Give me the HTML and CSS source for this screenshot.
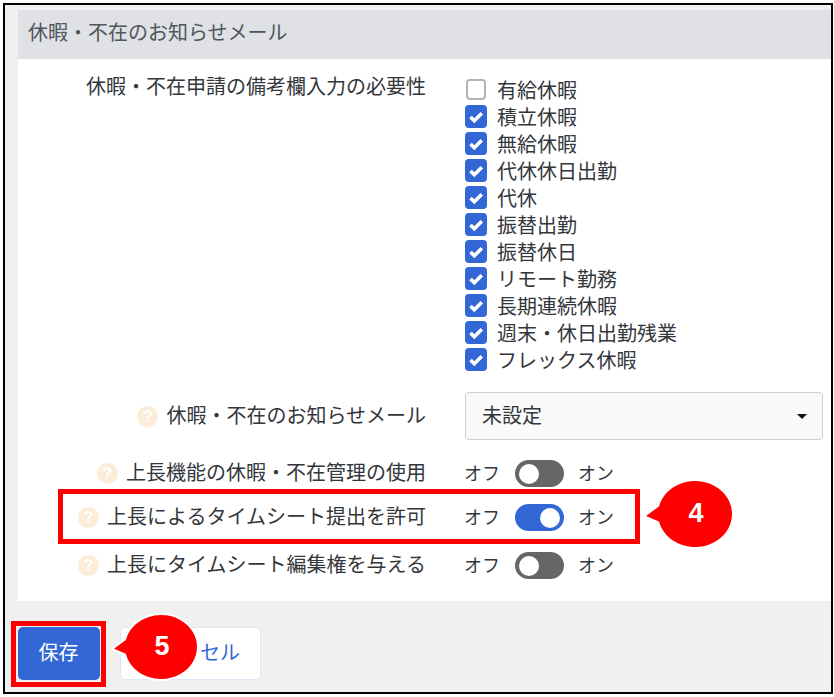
FILE: index.html
```html
<!DOCTYPE html>
<html lang="ja">
<head>
<meta charset="utf-8">
<title>休暇・不在のお知らせメール</title>
<link rel="stylesheet" href="styles.css">
</head>
<body>
<div class="frame">
  <section class="card">
    <h2 class="card-head">休暇・不在のお知らせメール</h2>
    <div class="card-body">
      <div class="row row-checks">
        <div class="label label-top">休暇・不在申請の備考欄入力の必要性</div>
        <ul class="checks">
          <li class="check-row"><span class="box"></span><span class="ctxt">有給休暇</span></li>
          <li class="check-row"><span class="box on"><svg viewBox="0 0 22 22"><path d="M5.5 11.5l3.8 3.8L16.8 7.8" /></svg></span><span class="ctxt">積立休暇</span></li>
          <li class="check-row"><span class="box on"><svg viewBox="0 0 22 22"><path d="M5.5 11.5l3.8 3.8L16.8 7.8" /></svg></span><span class="ctxt">無給休暇</span></li>
          <li class="check-row"><span class="box on"><svg viewBox="0 0 22 22"><path d="M5.5 11.5l3.8 3.8L16.8 7.8" /></svg></span><span class="ctxt">代休休日出勤</span></li>
          <li class="check-row"><span class="box on"><svg viewBox="0 0 22 22"><path d="M5.5 11.5l3.8 3.8L16.8 7.8" /></svg></span><span class="ctxt">代休</span></li>
          <li class="check-row"><span class="box on"><svg viewBox="0 0 22 22"><path d="M5.5 11.5l3.8 3.8L16.8 7.8" /></svg></span><span class="ctxt">振替出勤</span></li>
          <li class="check-row"><span class="box on"><svg viewBox="0 0 22 22"><path d="M5.5 11.5l3.8 3.8L16.8 7.8" /></svg></span><span class="ctxt">振替休日</span></li>
          <li class="check-row"><span class="box on"><svg viewBox="0 0 22 22"><path d="M5.5 11.5l3.8 3.8L16.8 7.8" /></svg></span><span class="ctxt">リモート勤務</span></li>
          <li class="check-row"><span class="box on"><svg viewBox="0 0 22 22"><path d="M5.5 11.5l3.8 3.8L16.8 7.8" /></svg></span><span class="ctxt">長期連続休暇</span></li>
          <li class="check-row"><span class="box on"><svg viewBox="0 0 22 22"><path d="M5.5 11.5l3.8 3.8L16.8 7.8" /></svg></span><span class="ctxt">週末・休日出勤残業</span></li>
          <li class="check-row"><span class="box on"><svg viewBox="0 0 22 22"><path d="M5.5 11.5l3.8 3.8L16.8 7.8" /></svg></span><span class="ctxt">フレックス休暇</span></li>
        </ul>
      </div>
      <div class="row row-select">
        <div class="label"><span class="help">?</span><span class="txt">休暇・不在のお知らせメール</span></div>
        <div class="select"><span class="txt">未設定</span><span class="caret"></span></div>
      </div>
      <div class="row row-toggle-a">
        <div class="label"><span class="help">?</span><span class="txt">上長機能の休暇・不在管理の使用</span></div>
        <div class="toggle-line"><span class="tl">オフ</span><span class="switch"></span><span class="tl">オン</span></div>
      </div>
      <div class="row row-toggle-b">
        <div class="label"><span class="help">?</span><span class="txt">上長によるタイムシート提出を許可</span></div>
        <div class="toggle-line"><span class="tl">オフ</span><span class="switch on"></span><span class="tl">オン</span></div>
      </div>
      <div class="row row-toggle-c">
        <div class="label"><span class="help">?</span><span class="txt">上長にタイムシート編集権を与える</span></div>
        <div class="toggle-line"><span class="tl">オフ</span><span class="switch"></span><span class="tl">オン</span></div>
      </div>
    </div>
  </section>
  <footer class="actions">
    <button class="btn btn-save">保存</button>
    <button class="btn btn-cancel">キャンセル</button>
  </footer>
</div>

<div class="mark mark-toggle"></div>
<div class="mark mark-save"></div>

<div class="callout callout-4">
  <svg viewBox="0 0 90 72"><path d="M3 38 L16 28.4 A37 33 0 1 1 16 43.6 Z" /></svg>
  <span class="callout-num">4</span>
</div>
<div class="callout callout-5">
  <svg viewBox="0 0 90 72"><path class="outlined" d="M3 38 L16 28.4 A37 33 0 1 1 16 43.6 Z" /></svg>
  <span class="callout-num">5</span>
</div>
</body>
</html>
```
FILE: styles.css
```css
* { box-sizing: border-box; }
html, body { margin: 0; padding: 0; }
body {
  width: 834px;
  height: 697px;
  background: #fff;
  position: relative;
  overflow: hidden;
  font-family: "Noto Sans CJK JP", "Noto Sans", sans-serif;
  font-size: 20px;
  color: #33363b;
}
.frame {
  margin: 3px 0 0 3px;
  width: 830px;
  height: 691px;
  border: 2px solid #000;
  background: #f0f0f0;
  padding: 5px 0 0 13px;
  display: flex;
  flex-direction: column;
}
.card { background: #fff; height: 591px; }
.card-head {
  margin: 0;
  height: 49px;
  background: #dfe1e5;
  padding: 0 10px;
  font-size: 20px;
  font-weight: 400;
  line-height: 44px;
  color: #50555c;
}
.card-body { padding: 17px 8px 0 0; }
.row {
  display: grid;
  grid-template-columns: 408px 358px;
  column-gap: 39px;
  align-items: center;
}
.label {
  display: flex;
  justify-content: flex-end;
  align-items: center;
  line-height: 27px;
  white-space: nowrap;
}
.label-top { align-self: start; margin-top: -4px; }
.txt { display: block; line-height: 24px; padding-bottom: 3px; }
.ctxt { display: block; line-height: 27px; }
.checks { list-style: none; margin: 0; padding: 0; }
.check-row {
  height: 27px;
  display: flex;
  align-items: center;
}
.box {
  width: 20px;
  height: 21px;
  margin: 0 11px 0 1px;
  border: 2px solid #b3b3b3;
  border-radius: 4px;
  background: #fff;
  flex: none;
}
.box.on {
  width: 22px;
  height: 23px;
  margin: 0 10px 0 0;
  border: 0;
  background: #3367d6;
}
.box svg { display: block; width: 22px; height: 23px; }
.box path { fill: none; stroke: #fff; stroke-width: 3.6; }
.row-select { margin-top: 19px; }
.select {
  height: 48px;
  border: 1px solid #c8d0d6;
  border-radius: 4px;
  background: #fafafa;
  display: flex;
  align-items: center;
  justify-content: space-between;
  padding: 0 15px 0 16px;
}
.caret {
  width: 0;
  height: 0;
  border-left: 5px solid transparent;
  border-right: 5px solid transparent;
  border-top: 5px solid #111;
}
.help {
  width: 21px;
  height: 21px;
  border-radius: 50%;
  background: #fdecd9;
  color: #fff;
  font-family: "Liberation Sans", sans-serif;
  font-size: 16px;
  font-weight: 700;
  line-height: 21px;
  text-align: center;
  margin-right: 8px;
  flex: none;
}
.row-toggle-a { margin-top: 20px; }
.row-toggle-b { margin-top: 17px; }
.row-toggle-c { margin-top: 21px; }
.toggle-line { display: flex; align-items: center; height: 27px; font-size: 18px; margin-left: -1px; }
.tl { width: 34px; white-space: nowrap; line-height: 25px; padding-bottom: 2px; }
.switch {
  width: 49px;
  height: 27px;
  border-radius: 14px;
  background: #666;
  margin: 0 14px 0 17px;
  position: relative;
  flex: none;
}
.switch::after {
  content: "";
  position: absolute;
  left: 4px;
  top: 3.5px;
  width: 20px;
  height: 20px;
  border-radius: 50%;
  background: #fff;
}
.switch.on { background: #3367d6; }
.switch.on::after { left: 25px; }
.actions {
  flex: 1;
  display: flex;
  gap: 20px;
  padding-top: 26px;
}
.btn {
  height: 53px;
  border-radius: 5px;
  font-family: inherit;
  font-size: 20px;
  padding: 0 1px 4px 0;
}
.btn-save { width: 82px; background: #3367d6; border: 0; color: #fff; }
.btn-cancel {
  width: 141px;
  background: #fff;
  border: 1px solid #dfe6f5;
  color: #3367d6;
}
.mark { position: absolute; border: 5px solid #f00; }
.mark-toggle { left: 58px; top: 489px; width: 582px; height: 55px; }
.mark-save { left: 11px; top: 621px; width: 95px; height: 66px; }
.callout { position: absolute; width: 90px; height: 72px; }
.callout svg { display: block; width: 90px; height: 72px; overflow: visible; }
.callout path { fill: #f00; }
.callout path.outlined { stroke: #fff; stroke-width: 2; }
.callout-4 { left: 643px; top: 478px; }
.callout-5 { left: 109px; top: 611px; }
.callout-num {
  position: absolute;
  left: 16px;
  top: -1px;
  width: 74px;
  height: 72px;
  display: flex;
  align-items: center;
  justify-content: center;
  color: #fff;
  font-family: "Liberation Sans", sans-serif;
  font-size: 27px;
  font-weight: 700;
}
```
